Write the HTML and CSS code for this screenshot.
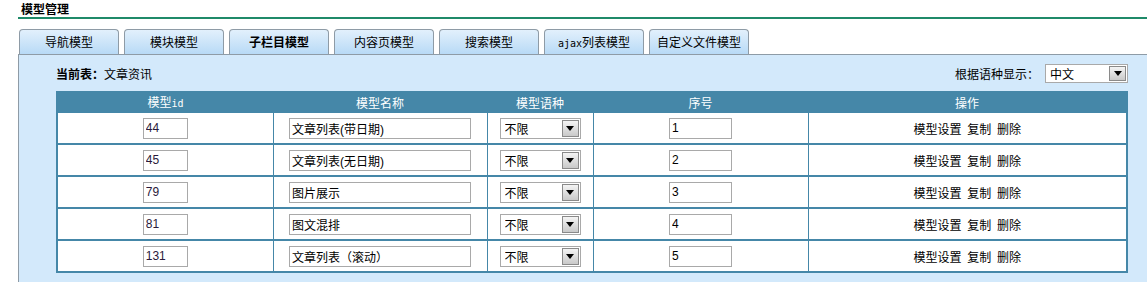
FILE: index.html
```html
<!DOCTYPE html>
<html lang="zh-CN">
<head>
    <meta charset="UTF-8">
    <title>模型管理</title>
    <link rel="stylesheet" href="styles.css">
</head>
<body>
    <h2 class="page-title">模型管理</h2>

    <ul class="tabs">
        <li class="tab">导航模型</li>
        <li class="tab">模块模型</li>
        <li class="tab active">子栏目模型</li>
        <li class="tab">内容页模型</li>
        <li class="tab">搜索模型</li>
        <li class="tab"><span class="latin">ajax</span>列表模型</li>
        <li class="tab">自定义文件模型</li>
    </ul>

    <div class="panel">
        <div class="info-bar">
            <div><b>当前表：</b>文章资讯</div>
            <div class="lang-filter">
                根据语种显示：
                <div class="fake-select wide">
                    <select><option>中文</option></select>
                    <span class="arrow"></span>
                </div>
            </div>
        </div>

        <table class="model-table">
            <colgroup>
                <col style="width:216px">
                <col style="width:214px">
                <col style="width:106px">
                <col style="width:215px">
                <col>
            </colgroup>
            <thead>
                <tr>
                    <th>模型<span class="latin">id</span></th>
                    <th>模型名称</th>
                    <th>模型语种</th>
                    <th>序号</th>
                    <th>操作</th>
                </tr>
            </thead>
            <tbody id="rows"></tbody>
        </table>
    </div>

    <script>
        var models = [
            { id: 44, name: "文章列表(带日期)", order: 1 },
            { id: 45, name: "文章列表(无日期)", order: 2 },
            { id: 79, name: "图片展示", order: 3 },
            { id: 81, name: "图文混排", order: 4 },
            { id: 131, name: "文章列表（滚动）", order: 5 }
        ];

        var html = "";
        models.forEach(function (m) {
            html += '<tr>' +
                '<td><input class="id-input" type="text" value="' + m.id + '"></td>' +
                '<td><input class="name-input" type="text" value="' + m.name + '"></td>' +
                '<td><div class="fake-select"><select><option>不限</option></select><span class="arrow"></span></div></td>' +
                '<td><input class="order-input" type="text" value="' + m.order + '"></td>' +
                '<td class="actions">模型设置 复制 删除</td>' +
                '</tr>';
        });
        document.getElementById("rows").innerHTML = html;
    </script>
</body>
</html>
```

FILE: styles.css
```css
/* Page */
body {
    margin: 0;
    font-family: "Noto Sans CJK SC", "Liberation Sans", sans-serif;
    font-size: 12px;
    color: #000;
    background: #fff;
}

.latin {
    font-family: "DejaVu Sans Mono", monospace;
    font-size: 10px;
}

/* Title */
.page-title {
    margin: 0 0 0 18px;
    padding: 2px 0 0 3px;
    height: 15px;
    line-height: 13px;
    font-size: 12px;
    font-weight: bold;
    border-bottom: 2px solid #1f8a69;
}

/* Tabs */
.tabs {
    list-style: none;
    margin: 10px 0 0 19px;
    padding: 0;
    display: flex;
    gap: 5px;
}

.tab {
    width: 98px;
    height: 24px;
    line-height: 24px;
    text-align: center;
    border: 1px solid #8e9ba6;
    border-bottom: none;
    border-radius: 4px 4px 0 0;
    background: linear-gradient(#e2f0fc, #b8daf6);
}

.tab.active {
    font-weight: bold;
}

/* Panel */
.panel {
    margin-left: 18px;
    border-top: 1px solid #8e9ba6;
    border-left: 1px solid #8e9ba6;
    background: #d3e9fb;
    padding: 0 19px 20px 37px;
}

.info-bar {
    height: 36px;
    display: flex;
    justify-content: space-between;
    align-items: center;
}

.lang-filter {
    display: flex;
    align-items: center;
    gap: 6px;
}

/* Select look-alike */
.fake-select {
    display: inline-flex;
    width: 79px;
    height: 19px;
    border: 1px solid #a9a9a9;
    background: #fff;
    vertical-align: middle;
}

.fake-select.wide {
    width: 81px;
    height: 17px;
}

.fake-select select {
    flex: 1;
    min-width: 0;
    appearance: none;
    border: none;
    background: transparent;
    font: inherit;
    padding: 0 4px;
    outline: none;
}

.fake-select .arrow {
    width: 17px;
    margin: 1px;
    border: 1px solid #8a8a8a;
    box-sizing: border-box;
    background: linear-gradient(#f4f4f4, #c9c9c9);
    display: flex;
    align-items: center;
    justify-content: center;
}

.fake-select .arrow::after {
    content: "";
    border-left: 4px solid transparent;
    border-right: 4px solid transparent;
    border-top: 5px solid #000;
}

/* Table */
.model-table {
    width: 1072px;
    border-collapse: collapse;
    table-layout: fixed;
    border: 2px solid #4587a8;
}

.model-table th {
    height: 20px;
    padding: 0;
    background: #4587a8;
    color: #fff;
    font-weight: normal;
    line-height: 18px;
}

.model-table td {
    height: 30px;
    padding: 0;
    text-align: center;
    background: #fff;
    border-left: 1px solid #4587a8;
    border-bottom: 2px solid #4587a8;
}

.model-table td.actions {
    word-spacing: 3px;
}

.model-table input {
    height: 21px;
    box-sizing: border-box;
    border: 1px solid #a9a9a9;
    padding: 0 2px;
    font-family: "Liberation Sans", "Noto Sans CJK SC", sans-serif;
    font-size: 12px;
    vertical-align: middle;
}

.id-input {
    width: 45px;
    color: #2a1a3a;
}

.name-input {
    width: 182px;
}

.order-input {
    width: 63px;
}
```
